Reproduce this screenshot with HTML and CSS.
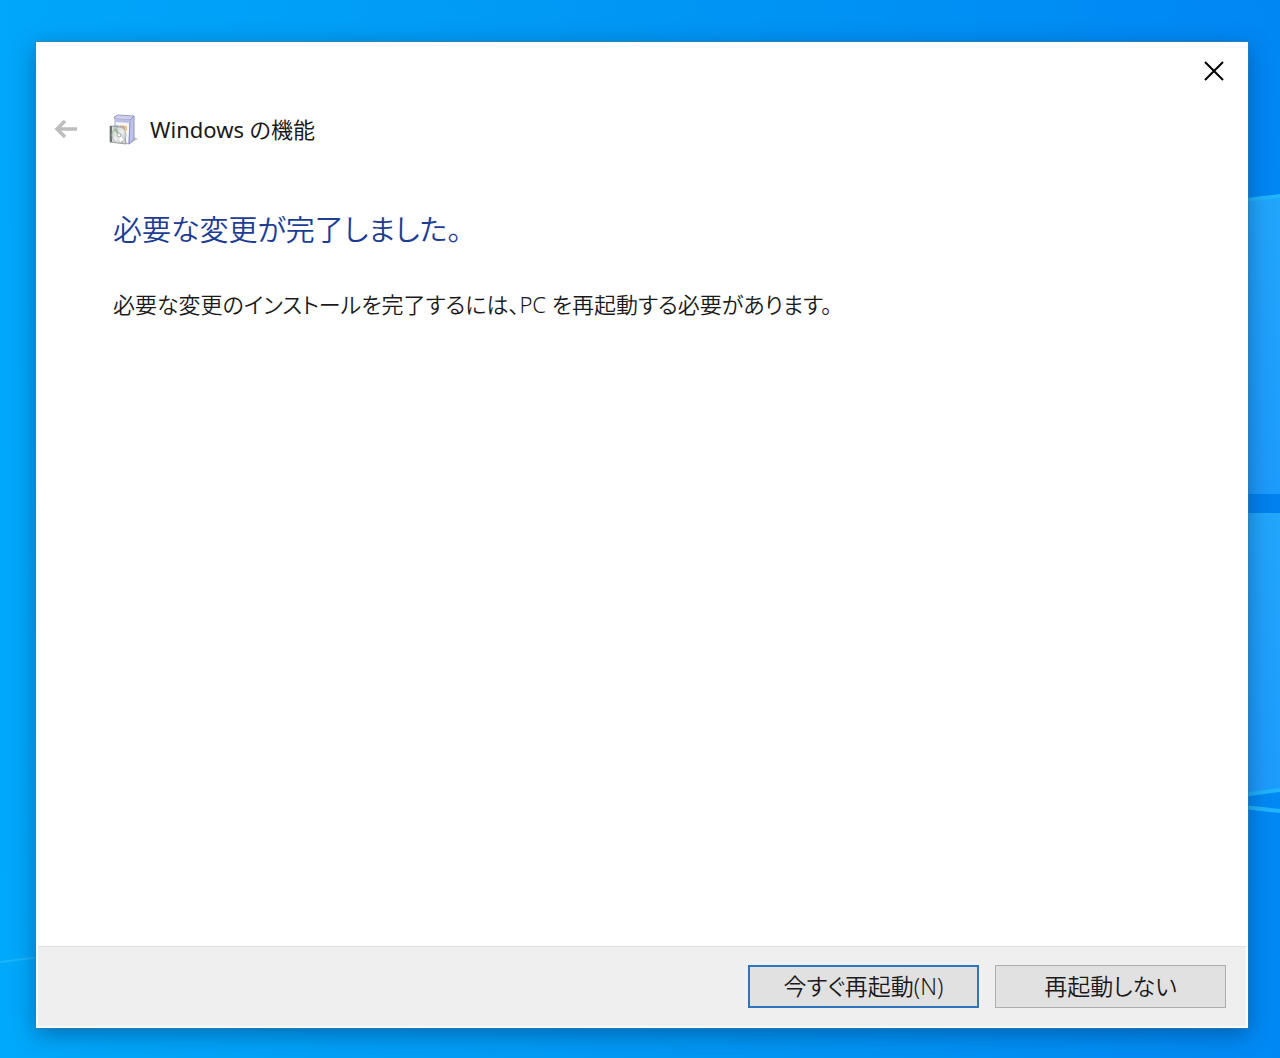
FILE: index.html
```html
<!DOCTYPE html>
<html lang="ja">
<head>
    <meta charset="UTF-8">
    <meta name="viewport" content="width=device-width, initial-scale=1.0">
    <title>Windows の機能</title>
    <link rel="stylesheet" href="styles.css">
</head>
<body>
    <!-- Wallpaper -->
    <svg class="wallpaper" viewBox="0 0 1280 1058" preserveAspectRatio="none" aria-hidden="true">
        <defs>
            <linearGradient id="pane" x1="0" y1="0" x2="0" y2="1">
                <stop offset="0" stop-color="#22a6fc"/>
                <stop offset="1" stop-color="#1d9bfc"/>
            </linearGradient>
        </defs>
        <path d="M1160 208 L1280 195 V494 H1160 Z" fill="url(#pane)"/>
        <path d="M1160 513 H1280 V790 L1160 804 Z" fill="url(#pane)"/>
        <path d="M1160 494 H1280 V513 H1160 Z" fill="#0082ee"/>
        <path d="M1160 210 L1280 196 M1160 806 L1280 790 M1160 798 L1280 811" fill="none" stroke="#20b4fa" stroke-width="4"/>
        <path d="M0 962 L40 957" fill="none" stroke="#1cb4fc" stroke-width="2"/>
    </svg>

    <main class="dialog">
        <div class="title-bar">
            <button class="close" aria-label="閉じる">
                <svg width="20" height="20" viewBox="0 0 20 20">
                    <path d="M1 1 L19 19 M19 1 L1 19" fill="none" stroke="#000" stroke-width="2"/>
                </svg>
            </button>
        </div>

        <header class="header">
            <button class="back" aria-label="戻る" disabled>
                <svg width="24" height="20" viewBox="0 0 24 20">
                    <path d="M23 10 H3 M11 2 L3 10 L11 18" fill="none" stroke="#bdbdbd" stroke-width="3.4"/>
                </svg>
            </button>
            <!-- Software box with a disc in front -->
            <svg class="app-icon" width="30" height="32" viewBox="0 0 30 32" aria-hidden="true">
                <defs>
                    <linearGradient id="disc" x1="0" y1="0" x2="1" y2="1">
                        <stop offset="0" stop-color="#b9c6b6"/>
                        <stop offset="0.5" stop-color="#eeeeee"/>
                        <stop offset="1" stop-color="#b3babb"/>
                    </linearGradient>
                </defs>
                <path d="M20 31 L29 26 L25 24 Z" fill="#c9c9cb"/>
                <path d="M5 4 L9 2 L25 3 L21 7 L6 6 Z" fill="#cfd0ee" stroke="#9a9bc4" stroke-width="1"/>
                <path d="M6 6 L21 7 L20 31 L6 28 Z" fill="#f6f7fd" stroke="#aaabcf" stroke-width="1"/>
                <path d="M21 7 L25 3 L25 27 L20 31 Z" fill="#c0c3e8" stroke="#8f91c0" stroke-width="1"/>
                <path d="M6 6 L21 7 L21 10 L6 9 Z" fill="#bcbee2"/>
                <path d="M11 12 L18 13 L18 18 L11 17 Z" fill="#f5c486"/>
                <path d="M5 12 L10 12 L8 16 L4 15 Z" fill="#a3c4e0"/>
                <path d="M1 13 L15 14 L17 31 L1 29 Z" fill="#c8ccc8" fill-opacity="0.7" stroke="#9ba09d" stroke-width="1"/>
                <path d="M2 13 V29" stroke="#6c726f" stroke-width="2"/>
                <ellipse cx="10" cy="22" rx="7" ry="8" fill="url(#disc)" stroke="#b0b6b2" stroke-width="1"/>
                <path d="M10 22 L5 17 L8 15 Z" fill="#97b894"/>
                <path d="M10 22 L15 27 L11 29 Z" fill="#fff"/>
                <circle cx="10" cy="22" r="2" fill="#fff" stroke="#a2a9a6" stroke-width="1"/>
            </svg>
            <span class="app-name">Windows の機能</span>
        </header>

        <section class="content">
            <h1>必要な変更が完了しました。</h1>
            <p>必要な変更のインストールを完了するには、PC を再起動する必要があります。</p>
        </section>

        <footer class="footer">
            <button class="btn primary">今すぐ再起動(N)</button>
            <button class="btn">再起動しない</button>
        </footer>
    </main>
</body>
</html>
```
FILE: styles.css
```css
* {
    box-sizing: border-box;
}
body {
    position: relative;
    display: flex;
    min-height: 100vh;
    margin: 0;
    padding: 42px 32px 30px 36px;
    background: linear-gradient(85deg, #00a9fb 0%, #0098f4 50%, #0087f4 100%);
    font-family: "Noto Sans", "Noto Sans CJK JP", sans-serif;
    font-weight: 350;
    font-feature-settings: "palt";
    color: #1a1a1a;
}
.wallpaper {
    position: absolute;
    inset: 0;
    width: 100%;
    height: 100%;
}
.dialog {
    position: relative;
    display: flex;
    flex: 1;
    flex-direction: column;
    background-color: #fff;
    box-shadow: 0 0 0 1px rgba(60, 125, 165, 0.6), 0 6px 22px rgba(0, 40, 90, 0.45);
}
button {
    font: inherit;
    font-feature-settings: inherit;
    color: inherit;
}
.close, .back {
    display: flex;
    padding: 0;
    border: none;
    background: none;
}
.title-bar {
    display: flex;
    justify-content: flex-end;
    padding: 19px 24px 0 0;
}
/* Header */
.header {
    display: flex;
    align-items: center;
    margin-top: 32px;
    padding-left: 18px;
}
.app-icon {
    margin: 0 11px 0 31px;
}
.app-name {
    font-size: 22px;
    font-weight: 400;
    line-height: 32px;
}
/* Content */
.content {
    flex: 1;
    padding: 63px 77px 0;
}
h1 {
    margin: 0;
    font-size: 29px;
    font-weight: 350;
    line-height: 44px;
    color: #1d3c94;
}
p {
    margin: 36px 0 0;
    font-size: 22px;
    line-height: 32px;
}
/* Footer */
.footer {
    display: flex;
    justify-content: flex-end;
    gap: 16px;
    margin: 0 2px 2px;
    padding: 18px 20px 18px;
    border-top: 1px solid #dfdfdf;
    background-color: #efefef;
}
.btn {
    width: 231px;
    height: 43px;
    padding: 0 0 3px;
    border: 1px solid #adadad;
    background-color: #e1e1e1;
    font-size: 23px;
}
.btn.primary {
    border: 2px solid #2f75bd;
}
```
